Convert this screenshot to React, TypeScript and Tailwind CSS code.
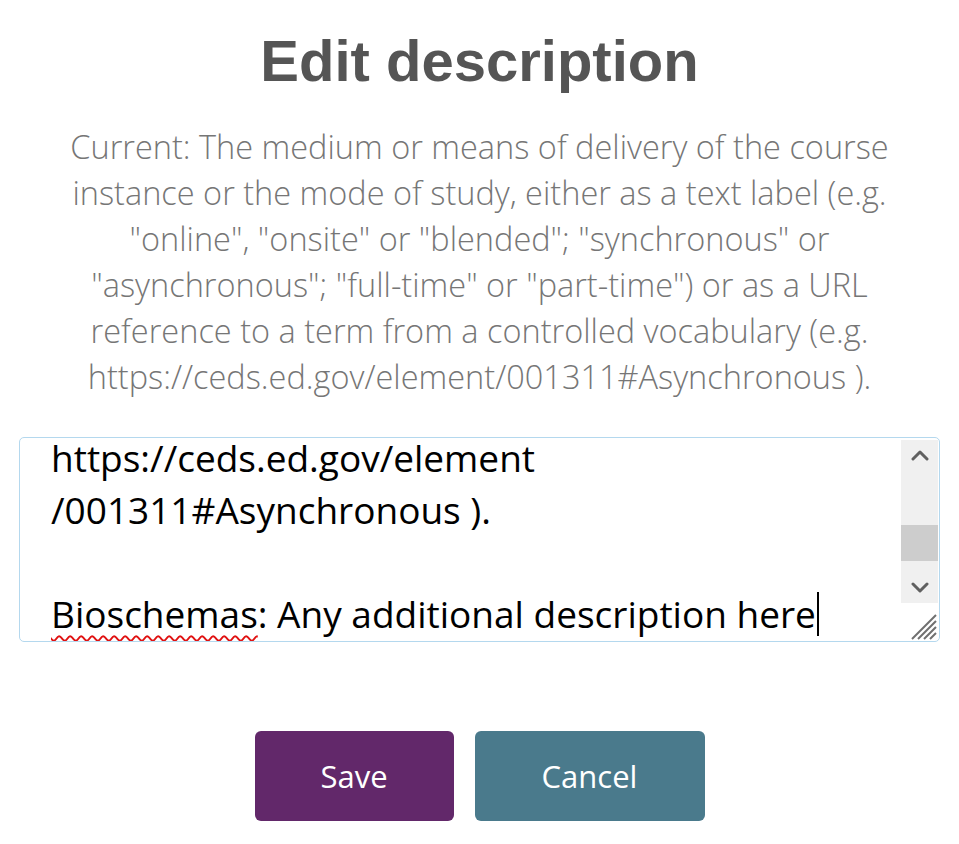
import React from 'react';

const uiFont = { fontFamily: '"Open Sans", "Noto Sans", sans-serif' };

const Chevron = ({ up }: { up?: boolean }) => (
  <svg width="18" height="12" viewBox="0 0 18 12" className="text-[#606060]">
    <path
      d={up ? 'M2 10 L9 3 L16 10' : 'M2 2 L9 9 L16 2'}
      fill="none"
      stroke="currentColor"
      strokeWidth="3"
      strokeLinecap="round"
      strokeLinejoin="round"
    />
  </svg>
);

const ResizeGrip = () => (
  <svg width="32" height="32" viewBox="0 0 32 32" className="text-[#707070]">
    <path d="M30 6 L6 30 M30 12 L12 30 M30 18 L18 30 M30 24 L24 30" stroke="currentColor" strokeWidth="2" />
  </svg>
);

export default function App() {
  return (
    <div className="min-h-screen bg-white flex flex-col items-center pt-[17px]" style={uiFont}>
      {/* Title */}
      <h1
        className="text-[58px] font-bold text-[#555555] leading-normal"
        style={{ fontFamily: '"Liberation Sans", Arial, sans-serif' }}
      >
        Edit description
      </h1>

      {/* Current description */}
      <p className="mt-[20px] text-center text-[32.5px] leading-[46px] font-light text-[#767676]">
        Current: The medium or means of delivery of the course
        <br />
        instance or the mode of study, either as a text label (e.g.
        <br />
        "online", "onsite" or "blended"; "synchronous" or
        <br />
        "asynchronous"; "full-time" or "part-time") or as a URL
        <br />
        reference to a term from a controlled vocabulary (e.g.
        <br />
        https://ceds.ed.gov/element/001311#Asynchronous ).
      </p>

      {/* Textarea */}
      <div className="mt-[37px] w-[921px] h-[205px] border border-[#b4d8ee] rounded-[5px] flex overflow-hidden">
        <div className="flex-1 overflow-hidden pl-[31px]">
          <div className="text-[37px] leading-[52px] text-black">
            <div className="h-[46px] leading-[40px]">https://ceds.ed.gov/element</div>
            <div>/001311#Asynchronous ).</div>
            <div>&nbsp;</div>
            <div className="flex items-center">
              <span className="underline decoration-wavy decoration-[#e01010] decoration-[1.5px] underline-offset-[7px]">
                Bioschemas
              </span>
              <span className="whitespace-pre">: Any additional description here</span>
              <span className="inline-block w-[2px] h-[44px] bg-black ml-[1px]" />
            </div>
          </div>
        </div>
        <div className="w-[37px] flex flex-col mt-[2px] mr-[1px]">
          <div className="h-[163px] bg-[#f0f0f0] flex flex-col items-center">
            <div className="h-[30px] flex items-center justify-center">
              <Chevron up />
            </div>
            <div className="flex-1">
              <div className="mt-[55px] w-[37px] h-[36px] bg-[#cdcdcd]" />
            </div>
            <div className="h-[30px] flex items-center justify-center">
              <Chevron />
            </div>
          </div>
          <div className="flex-1 flex items-end justify-end">
            <ResizeGrip />
          </div>
        </div>
      </div>

      {/* Buttons */}
      <div className="mt-[89px] flex gap-[21px]">
        <button className="w-[199px] h-[90px] rounded-[6px] bg-[#62286a] text-white text-[31px]">
          Save
        </button>
        <button className="w-[230px] h-[90px] rounded-[6px] bg-[#4a7a8c] text-white text-[31px]">
          Cancel
        </button>
      </div>
    </div>
  );
}
